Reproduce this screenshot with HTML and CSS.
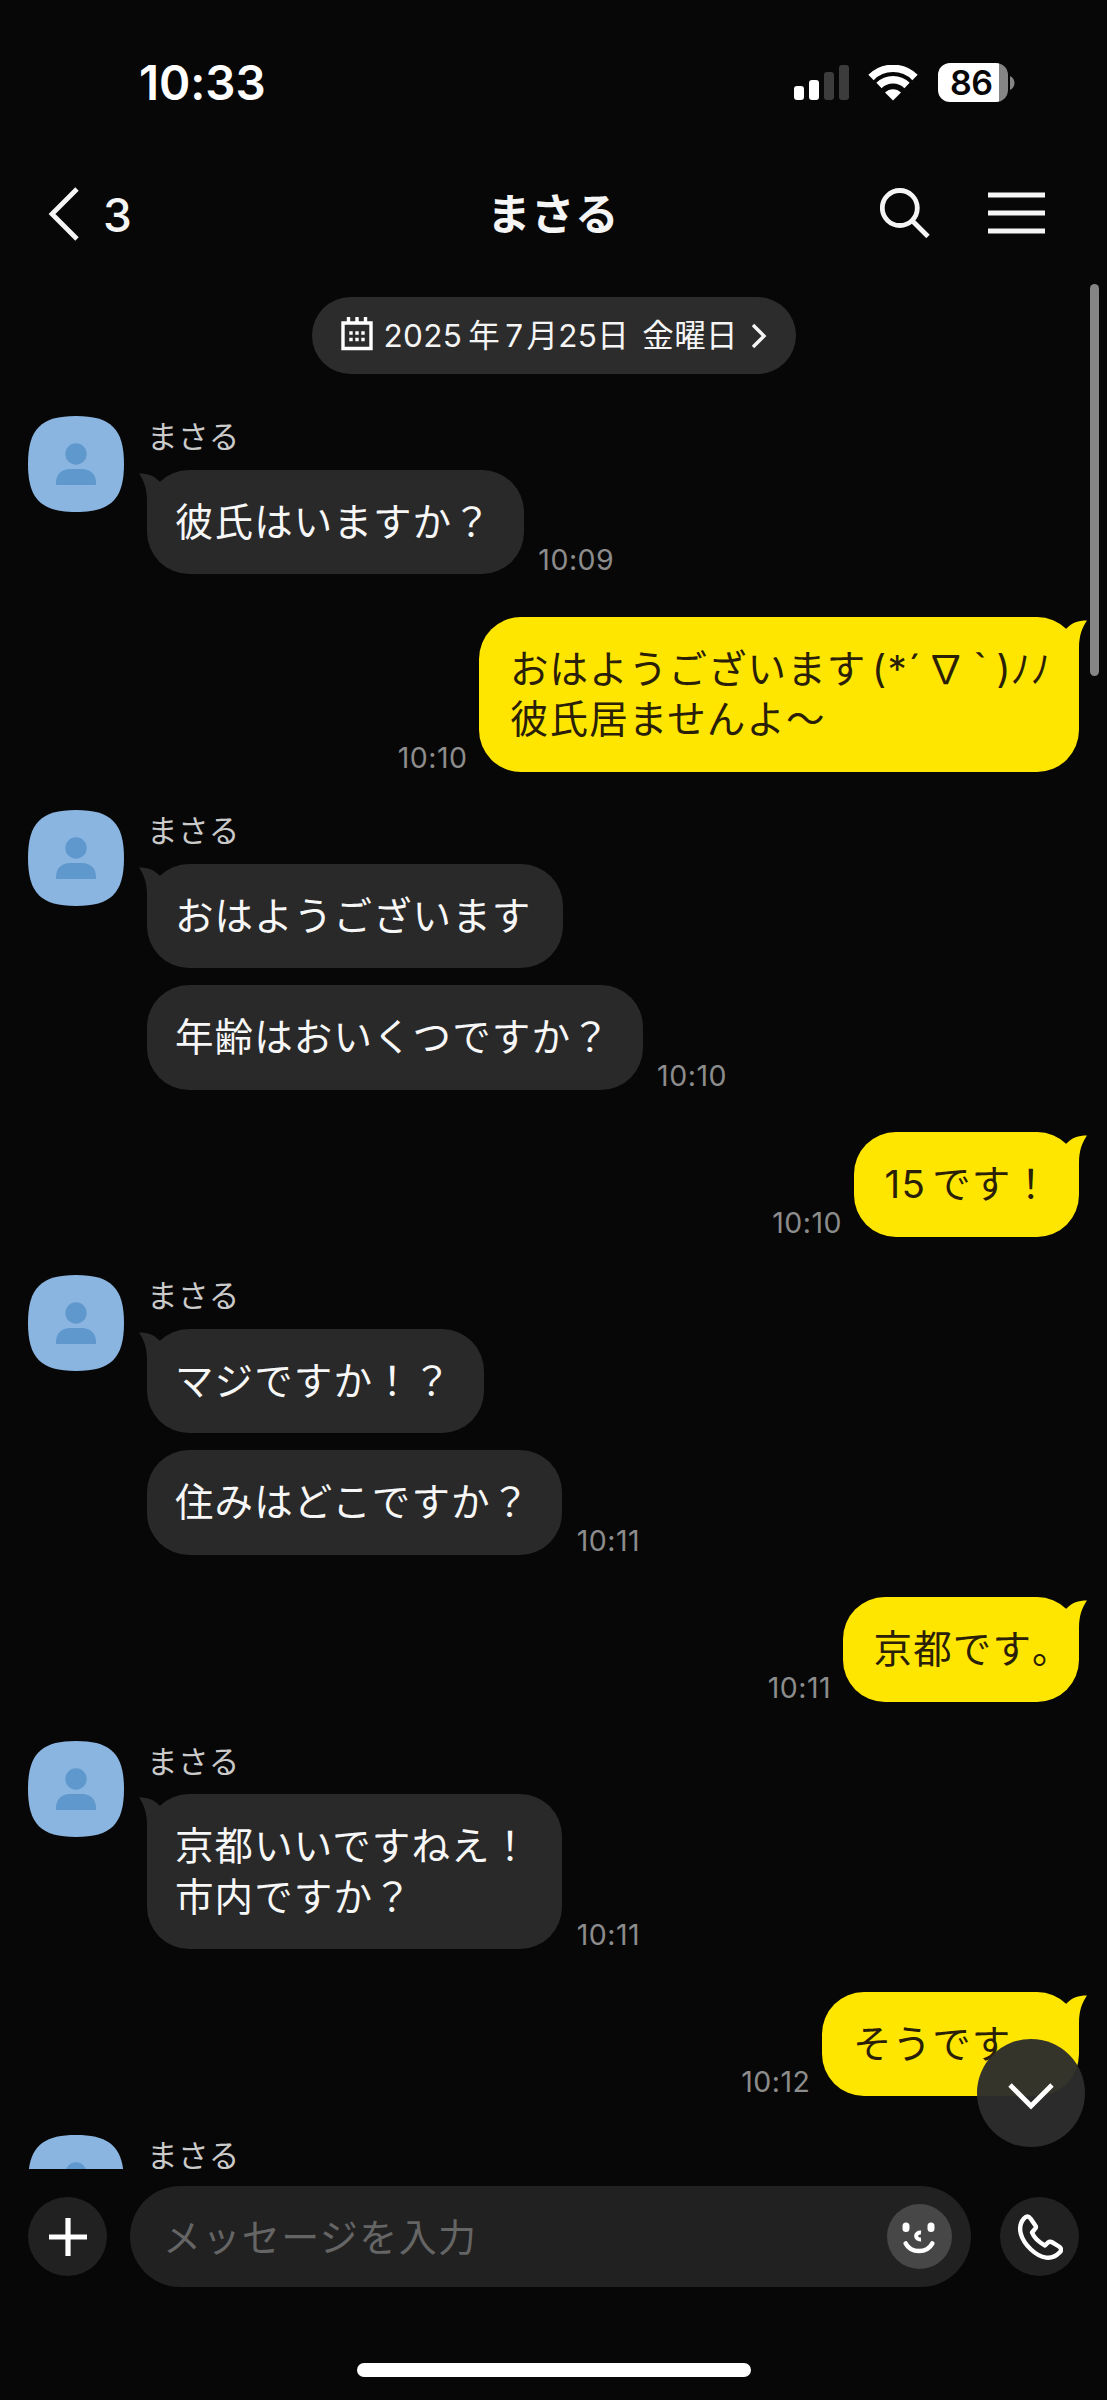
FILE: index.html
```html
<!DOCTYPE html>
<html lang="ja">
<head>
<meta charset="utf-8">
<title>まさる</title>
<link rel="stylesheet" href="styles.css">
</head>
<body>
<svg class="defs" aria-hidden="true">
  <symbol id="avatar" viewBox="0 0 96 96">
    <path d="M48 0C83 0 96 13 96 48S83 96 48 96 0 83 0 48 13 0 48 0Z" fill="#8ab5e1"/>
    <circle cx="48" cy="38" r="10.7" fill="#5f98cc"/>
    <path d="M28 69V67C28 58 34 53 42 53H54C62 53 68 58 68 67V69Z" fill="#5f98cc"/>
  </symbol>
  <symbol id="tail" viewBox="0 0 30 42">
    <path d="M30 .5C25.500 7 22 15 22 28V41H2V16L10.500 7.500C15 3 21 .5 30 .5Z" fill="currentColor"/>
  </symbol>
</svg>
<div class="phone">
  <div class="status">
    <span class="clock">10:33</span>
    <svg class="signal" width="56" height="36" viewBox="0 0 56 36">
      <rect x="0" y="21" width="10" height="14" rx="3" fill="#fff"/>
      <rect x="15" y="15" width="10" height="20" rx="3" fill="#fff"/>
      <rect x="30" y="7" width="10" height="28" rx="3" fill="#3c3c3c"/>
      <rect x="45" y="0" width="10" height="35" rx="3" fill="#3c3c3c"/>
    </svg>
    <svg class="wifi" width="50" height="36" viewBox="0 0 50 36">
      <path d="M3 12.500A31 31 0 0 1 47 12.500" fill="none" stroke="#fff" stroke-width="7.500"/>
      <path d="M11 20.500A20 20 0 0 1 39 20.500" fill="none" stroke="#fff" stroke-width="7.500"/>
      <path d="M25 35.500L17 27.500C21.500 23 28.500 23 33 27.500Z" fill="#fff"/>
    </svg>
    <div class="battery"><span>86</span></div>
    <svg width="6" height="14" viewBox="0 0 6 14"><path d="M0 0C6 3 6 11 0 14Z" fill="#858585"/></svg>
  </div>
  <header class="header">
    <div class="back">
      <svg width="32" height="54" viewBox="0 0 32 54"><path d="M29 2L4 27L29 52" fill="none" stroke="#f5f5f5" stroke-width="4.800"/></svg>
      <span>3</span>
    </div>
    <h1>まさる</h1>
    <div class="tools">
      <svg width="50" height="50" viewBox="0 0 50 50" fill="none" stroke="#f5f5f5" stroke-width="4.800"><circle cx="19.800" cy="20" r="17.500"/><path d="M32 32.500L48 48.500"/></svg>
      <svg width="58" height="42" viewBox="0 0 58 42"><path d="M0 3H57M0 21H57M0 39H57" stroke="#f5f5f5" stroke-width="5"/></svg>
    </div>
  </header>
  <main class="chat">
    <div class="date">
      <svg class="cal" width="32" height="34" viewBox="0 0 32 34"><path d="M2 6H30V31.500H2ZM7.500 0V6M16 0V6M24.500 0V6" fill="none" stroke="#fff" stroke-width="3.400"/><path d="M8.300 16h3.400m2.600 0h3.400m2.600 0h3.400M8.300 22.500h3.400m2.600 0h3.400m2.600 0h3.400" stroke="#fff" stroke-width="3.400"/></svg>
      <span class="day"><b>2025</b>年<i>7</i>月25日 金曜日</span>
      <svg class="go" width="16" height="26" viewBox="0 0 16 26"><path d="M2 2L13 13L2 24" fill="none" stroke="#f5f5f5" stroke-width="3.400"/></svg>
    </div>

    <section class="theirs">
      <svg class="avatar"><use href="#avatar"/></svg>
      <div class="stack">
        <div class="name">まさる</div>
        <div class="row"><p class="bubble tailed"><svg class="tail"><use href="#tail"/></svg>彼氏はいますか？</p><time>10:09</time></div>
      </div>
    </section>
    <section class="mine"><time>10:10</time><p class="bubble wide"><svg class="tail"><use href="#tail"/></svg>おはようございます<span class="kaomoji"><span class="open">(</span><span class="star">*</span><span class="acute">´</span><span class="nabla">∇</span><span class="grave">｀</span><span class="close">)</span><span class="no">ﾉ</span><span class="no">ﾉ</span></span><br>彼氏居ませんよ〜</p></section>

    <section class="theirs">
      <svg class="avatar"><use href="#avatar"/></svg>
      <div class="stack">
        <div class="name">まさる</div>
        <div class="row"><p class="bubble tailed"><svg class="tail"><use href="#tail"/></svg>おはようございます</p></div>
        <div class="row"><p class="bubble">年齢はおいくつですか？</p><time>10:10</time></div>
      </div>
    </section>
    <section class="mine"><time>10:10</time><p class="bubble"><svg class="tail"><use href="#tail"/></svg><span class="num">15</span>です！</p></section>

    <section class="theirs">
      <svg class="avatar"><use href="#avatar"/></svg>
      <div class="stack">
        <div class="name">まさる</div>
        <div class="row"><p class="bubble tailed"><svg class="tail"><use href="#tail"/></svg>マジですか！？</p></div>
        <div class="row"><p class="bubble">住みはどこですか？</p><time>10:11</time></div>
      </div>
    </section>
    <section class="mine"><time>10:11</time><p class="bubble"><svg class="tail"><use href="#tail"/></svg>京都です<span class="stop">。</span></p></section>

    <section class="theirs">
      <svg class="avatar"><use href="#avatar"/></svg>
      <div class="stack">
        <div class="name">まさる</div>
        <div class="row"><p class="bubble tailed"><svg class="tail"><use href="#tail"/></svg>京都いいですねえ！<br>市内ですか？</p><time>10:11</time></div>
      </div>
    </section>
    <section class="mine"><time>10:12</time><p class="bubble last"><svg class="tail"><use href="#tail"/></svg>そうです</p></section>

    <section class="theirs">
      <svg class="avatar"><use href="#avatar"/></svg>
      <div class="stack"><div class="name">まさる</div></div>
    </section>
    <div class="scrollbar"></div>
  </main>
  <footer class="composer">
    <div class="round"><svg width="38" height="38" viewBox="0 0 38 38"><path d="M0 19H38M19 0V38" stroke="#fff" stroke-width="5.200"/></svg></div>
    <div class="field">
      <span>メッセージを入力</span>
      <svg class="smile" width="65" height="65" viewBox="0 0 65 65"><circle cx="32.500" cy="32.500" r="32.500" fill="#474747"/><rect x="15.500" y="18.500" width="7" height="9.500" rx="3.500" fill="#fff"/><rect x="40.500" y="18.500" width="7" height="9.500" rx="3.500" fill="#fff"/><path d="M34 28.500C27.500 28 27.500 36 34 35.500" fill="none" stroke="#fff" stroke-width="4"/><path d="M18.700 39.500C24 49.500 40 49.500 45.300 39.500" fill="none" stroke="#fff" stroke-width="4.600" stroke-linecap="round"/></svg>
    </div>
    <div class="round"><svg width="46" height="46" viewBox="0 0 46 46"><path d="M7 4.500Q10.500 .5 13.500 4.500L18 11Q20 13 17.500 15.500L15 18.500Q18 26 28 31.500L31 28.500Q33 27 35.500 28.500L42 32.500Q46 35.500 42.500 38.500C35 46.500 24 45 14 35.500C3.500 25.500 -.5 13 7 4.500Z" fill="none" stroke="#fff" stroke-width="4.400" stroke-linejoin="round"/></svg></div>
  </footer>
  <div class="home"></div>
  <div class="jump"><svg width="46" height="28" viewBox="0 0 46 28"><path d="M2 2L23 23L44 2" fill="none" stroke="#fff" stroke-width="4.800"/></svg></div>
</div>
</body>
</html>
```
FILE: styles.css
```css
* { box-sizing: border-box; margin: 0; }
body { background: #070707; color: #fff; font-family: Inter, "Noto Sans CJK JP", sans-serif; }
svg { display: block; flex: none; }
.defs { position: absolute; width: 0; height: 0; }
.phone { position: relative; width: 1107px; height: 2400px; overflow: hidden; display: flex; flex-direction: column; background: #070707; }

.status { height: 128px; flex: none; display: flex; align-items: center; padding: 37px 91px 0 139px; }
.clock { font-size: 47.500px; font-weight: 600; letter-spacing: -.1px; line-height: 60px; }
.signal { margin-left: auto; }
.wifi { margin: 0 20px 0 18.500px; }
.battery { width: 70px; height: 39px; margin-right: 2px; border-radius: 12px; background: linear-gradient(90deg, #fff 61px, #858585 61px); color: #070707; font-size: 34px; font-weight: 600; line-height: 39px; padding-left: 12px; letter-spacing: -.5px; }

.header { height: 156px; flex: none; display: grid; grid-template-columns: 1fr auto 1fr; align-items: center; padding: 15px 61px 0 48px; color: #f5f5f5; }
.header h1 { font-size: 43.500px; font-weight: 700; line-height: 60px; letter-spacing: .5px; margin-left: 12px; }
.back { display: flex; align-items: center; gap: 23px; font-size: 46px; font-weight: 500; line-height: 56px; }
.back span { margin-top: 2px; }
.tools { display: flex; align-items: center; justify-content: flex-end; gap: 58px; margin-top: -1px; }

.chat { position: relative; height: 1885px; flex: none; overflow: hidden; padding: 13px 28px 0; }
.date { width: 484px; height: 77px; margin: 0 auto 42px; border-radius: 39px; background: #2c2c2c; display: flex; align-items: center; padding-left: 29px; }
.cal { margin-top: -4px; }
.day { flex: none; white-space: nowrap; font-size: 31.500px; letter-spacing: .35px; word-spacing: 4px; line-height: 48px; margin-left: 11px; color: #f5f5f5; }
.day b, .day i { font-weight: 400; font-style: normal; margin-right: 6px; }
.day i { margin: 0 3px 0 5px; }
.go { margin-left: auto; margin-right: 29px; }

.theirs { display: flex; align-items: flex-start; gap: 23px; margin-bottom: 42.500px; }
.avatar { width: 96px; height: 96px; margin-bottom: -60px; }
.stack { display: flex; flex-direction: column; gap: 17px; }
.name { height: 36.500px; line-height: 42px; font-size: 30.500px; letter-spacing: .4px; color: #cacaca; }
.row, .mine { display: flex; align-items: flex-end; }
.row { gap: 14.500px; }
.mine { justify-content: flex-end; gap: 11.500px; margin-bottom: 38.700px; }
.bubble { position: relative; border-radius: 42px; background: #292929; padding: 27px 32px 27px 28px; font-size: 38.500px; letter-spacing: 1.100px; line-height: 50.500px; white-space: nowrap; color: #f7f7f7; }
.mine .bubble { background: #ffe600; color: #2a2007; padding-left: 31px; padding-right: 28px; }
.tail { position: absolute; top: 3px; width: 30px; height: 42px; color: #ffe600; right: -8px; }
.theirs .tail { color: #292929; right: auto; left: -8px; transform: scaleX(-1); }
time { font-size: 28.500px; line-height: 28px; letter-spacing: .5px; color: #8c8c8c; }
.mine .bubble.wide { width: 600px; padding-right: 0; }
.kaomoji { display: inline-flex; letter-spacing: 0; margin-left: 4px; text-align: center; }
.open { width: 17px; }
.star { width: 15px; }
.acute { width: 24px; }
.nabla { width: 31px; }
.grave { width: 34px; margin-left: 5px; text-align: left; transform: translateY(6px); }
.close { width: 14px; }
.no { width: 20px; }
.num { margin-right: 6px; letter-spacing: 1.300px; }
.stop { display: inline-block; width: 19px; }
.mine .bubble.last { width: 257px; }
.scrollbar { position: absolute; top: 0; right: 8px; width: 9px; height: 392px; border-radius: 5px; background: #858585; }

.composer { height: 135px; flex: none; display: flex; align-items: center; gap: 23px; padding: 0 28px; }
.round { width: 79px; height: 79px; flex: none; border-radius: 50%; background: #212121; display: flex; align-items: center; justify-content: center; }
.field { width: 841px; height: 101px; border-radius: 51px; background: #212121; display: flex; align-items: center; justify-content: space-between; padding: 0 19px 0 33px; color: #656565; font-size: 38px; letter-spacing: 1.400px; }
.field span { margin-top: -4px; }
.composer .round:last-child { margin-left: 6px; }
.home { width: 394px; height: 14px; margin: 59px auto 0; border-radius: 7px; background: #fff; flex: none; }
.jump { position: absolute; left: 977px; top: 2039px; width: 108px; height: 108px; border-radius: 50%; display: flex; align-items: center; justify-content: center; background: rgba(45, 45, 45, .96); padding-top: 8px; }
```
